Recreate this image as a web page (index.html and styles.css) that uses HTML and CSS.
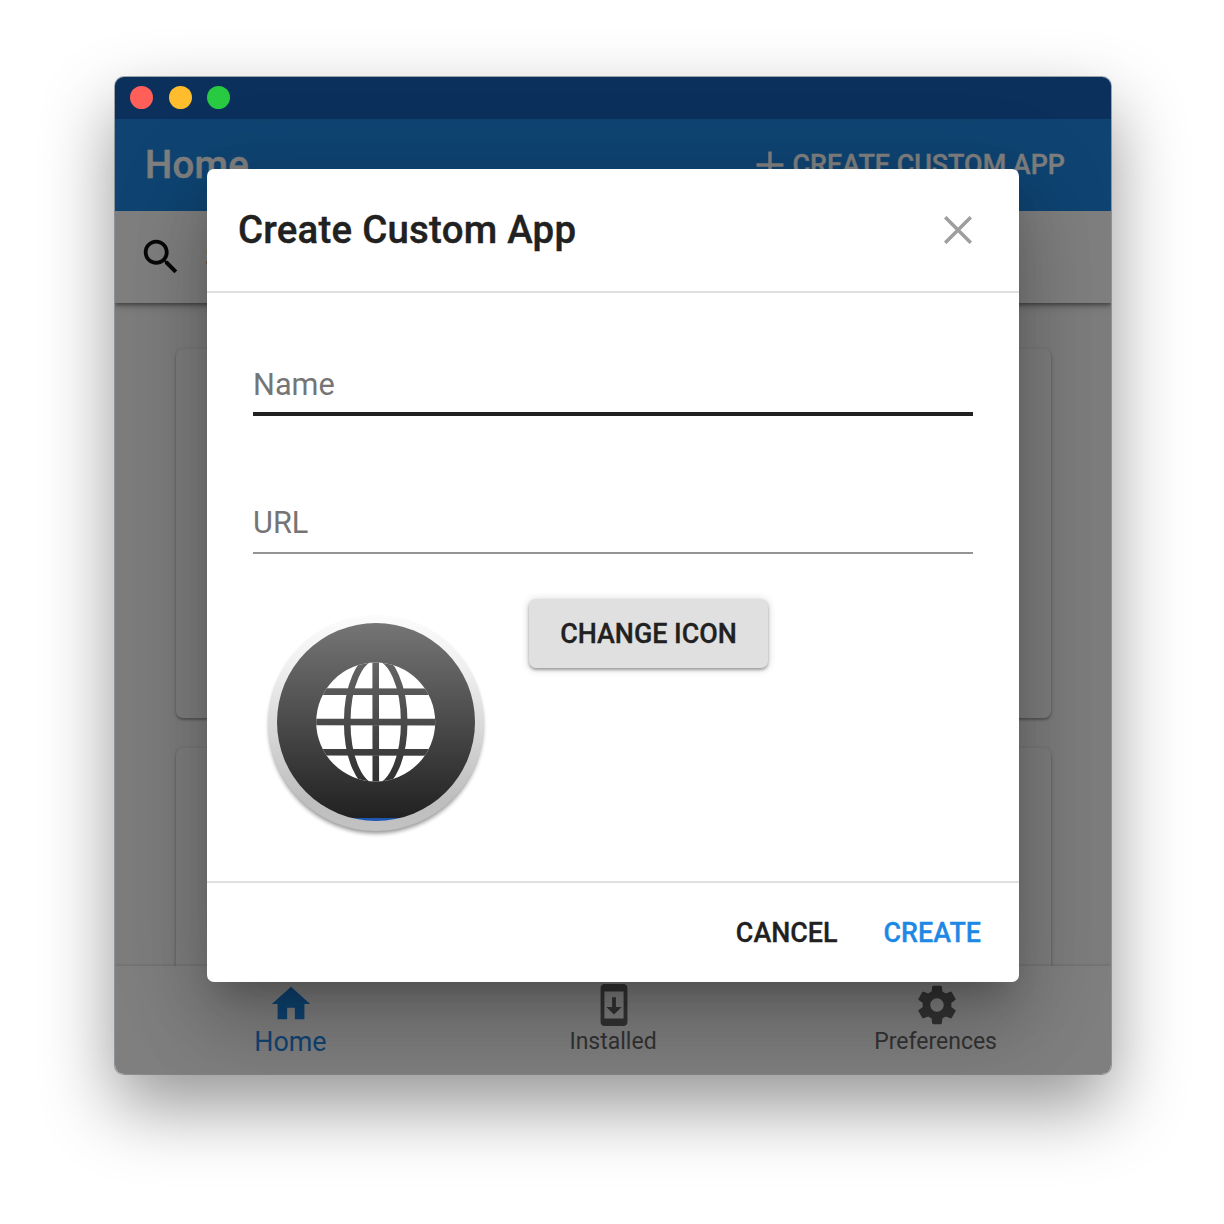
FILE: index.html
```html
<!DOCTYPE html>
<html lang="en">
<head>
<meta charset="utf-8">
<title>Create Custom App</title>
<link rel="stylesheet" href="styles.css">
</head>
<body>
<div class="window">
  <div class="titlebar">
    <span class="light light-close"></span>
    <span class="light light-min"></span>
    <span class="light light-max"></span>
  </div>
  <header class="appbar">
    <h1 class="appbar-title">Home</h1>
    <div class="appbar-action">
      <svg class="plus" viewBox="0 0 28 28"><path d="M14 .5v27M.5 14h27" stroke="currentColor" stroke-width="3.4"/></svg>
      <span>CREATE CUSTOM APP</span>
    </div>
  </header>
  <div class="search">
    <svg class="icon" viewBox="0 0 24 24"><path d="M15.5 14h-.79l-.28-.27C15.41 12.59 16 11.11 16 9.5 16 5.91 13.09 3 9.5 3S3 5.91 3 9.5 5.91 16 9.5 16c1.61 0 3.09-.59 4.23-1.57l.27.28v.79l5 4.99L20.49 19l-4.99-5zm-6 0C7.01 14 5 11.99 5 9.5S7.01 5 9.5 5 14 7.01 14 9.5 11.99 14 9.5 14z"/></svg>
    <span class="search-text">Search apps</span>
  </div>
  <main class="content">
    <div class="card"></div>
    <div class="card"></div>
  </main>
  <nav class="bottomnav">
    <div class="tab tab-active">
      <svg class="icon" viewBox="0 0 24 24"><path d="M10 20v-6h4v6h5v-8h3L12 3 2 12h3v8z"/></svg>
      <span>Home</span>
    </div>
    <div class="tab">
      <svg class="icon" viewBox="0 0 24 24"><path d="M17 1.01L7 1c-1.1 0-2 .9-2 2v18c0 1.1.9 2 2 2h10c1.1 0 2-.9 2-2V3c0-1.1-.9-1.99-2-1.99zM17 19H7V5h10v14zm-1-6h-3V8h-2v5H8l4 4 4-4z"/></svg>
      <span>Installed</span>
    </div>
    <div class="tab">
      <svg class="icon" viewBox="0 0 24 24"><path d="M19.43 12.98c.04-.32.07-.64.07-.98s-.03-.66-.07-.98l2.11-1.65c.19-.15.24-.42.12-.64l-2-3.46c-.12-.22-.39-.3-.61-.22l-2.49 1c-.52-.4-1.08-.73-1.69-.98l-.38-2.65C14.46 2.18 14.25 2 14 2h-4c-.25 0-.46.18-.49.42l-.38 2.65c-.61.25-1.17.59-1.69.98l-2.49-1c-.23-.09-.49 0-.61.22l-2 3.46c-.13.22-.07.49.12.64l2.11 1.65c-.04.32-.07.65-.07.98s.03.66.07.98l-2.11 1.65c-.19.15-.24.42-.12.64l2 3.46c.12.22.39.3.61.22l2.49-1c.52.4 1.08.73 1.69.98l.38 2.65c.03.24.24.42.49.42h4c.25 0 .46-.18.49-.42l.38-2.65c.61-.25 1.17-.59 1.69-.98l2.49 1c.23.09.49 0 .61-.22l2-3.46c.12-.22.07-.49-.12-.64l-2.11-1.65zM12 15.5c-1.93 0-3.5-1.57-3.5-3.5s1.57-3.5 3.5-3.5 3.5 1.57 3.5 3.5-1.57 3.5-3.5 3.5z"/></svg>
      <span>Preferences</span>
    </div>
  </nav>
  <div class="backdrop">
    <section class="dialog">
      <header class="dialog-head">
        <h2 class="dialog-title">Create Custom App</h2>
        <svg class="close" viewBox="0 0 28 28"><path d="M1.2 1.2l25.600 25.600M26.800 1.200L1.200 26.800" stroke="currentColor" stroke-width="3.5"/></svg>
      </header>
      <div class="dialog-body">
        <div class="field field-focused">Name</div>
        <div class="field">URL</div>
        <div class="icon-row">
          <svg class="app-icon" viewBox="0 0 246 246">
            <defs>
              <linearGradient id="ring" x1="0" y1="0" x2="0" y2="1">
                <stop offset="0" stop-color="#fcfcfc"/><stop offset=".25" stop-color="#efefef"/><stop offset=".85" stop-color="#bebebe"/><stop offset="1" stop-color="#c2c2c2"/>
              </linearGradient>
              <linearGradient id="disc" gradientUnits="userSpaceOnUse" x1="0" y1="24" x2="0" y2="222">
                <stop offset="0" stop-color="#757575"/><stop offset=".987" stop-color="#212121"/><stop offset=".987" stop-color="#1d57b0"/><stop offset="1" stop-color="#1d57b0"/>
              </linearGradient>
              <clipPath id="globe"><circle cx="122.700" cy="123" r="59.500"/></clipPath>
              <filter id="soft" x="-10%" y="-10%" width="120%" height="125%"><feGaussianBlur stdDeviation="2"/></filter>
            </defs>
            <circle cx="123" cy="127.500" r="107" fill="#000" opacity=".42" filter="url(#soft)"/>
            <circle cx="123" cy="124" r="108" fill="url(#ring)"/>
            <circle cx="123" cy="123" r="99" fill="url(#disc)"/>
            <circle cx="122.700" cy="123" r="59.500" fill="#fff"/>
            <g clip-path="url(#globe)" fill="none" stroke="url(#disc)" stroke-width="6.600">
              <ellipse cx="122.700" cy="123" rx="28.500" ry="64.700"/>
              <path d="M122.700 62L122.800 184M62 92.600L184 92.700M62 123L184 123.100M62 153.300L184 153.400"/>
            </g>
          </svg>
          <div class="raised">CHANGE ICON</div>
        </div>
      </div>
      <footer class="dialog-foot">
        <span>CANCEL</span>
        <span class="primary">CREATE</span>
      </footer>
    </section>
  </div>
</div>
</body>
</html>
```
FILE: styles.css
```css
* { box-sizing: border-box; }
body {
  margin: 0;
  height: 1224px;
  padding: 77px 0 0 115px;
  overflow: hidden;
  background: #fff;
  font-family: Roboto, "Liberation Sans", sans-serif;
  color: #212121;
}
h1, h2 {
  margin: 0;
  padding-bottom: 2px;
  font-size: 38.4px;
  font-weight: 500;
  letter-spacing: .25px;
  -webkit-text-stroke: .4px currentColor;
}
.window {
  position: relative;
  display: flex;
  flex-direction: column;
  width: 996px;
  height: 997px;
  border-radius: 9px;
  background: #fafafa;
  box-shadow: 0 0 0 1px rgba(80, 90, 100, .5), 0 32px 72px rgba(0, 0, 0, .42);
}
.titlebar {
  height: 42px;
  display: flex;
  align-items: center;
  gap: 15.5px;
  padding: 0 0 1px 15px;
  border-radius: 9px 9px 0 0;
  background: #1660b8;
}
/* window controls stay bright above the backdrop */
.light { position: relative; z-index: 3; width: 23px; height: 23px; border-radius: 50%; }
.light-close { background: #ff5f58; }
.light-min { background: #ffbd2e; }
.light-max { background: #28ca42; }
.appbar {
  height: 92px;
  display: flex;
  align-items: center;
  justify-content: space-between;
  padding: 0 46px 0 30px;
  background: #1e88e5;
  color: #fff;
}
.appbar-action {
  display: flex;
  align-items: center;
  gap: 9px;
  font-size: 26.9px;
  font-weight: 500;
  -webkit-text-stroke: .3px currentColor;
}
.plus { width: 28px; height: 28px; }
.icon { width: 46px; height: 46px; fill: currentColor; flex: none; }
.search {
  position: relative;
  height: 92px;
  flex: none;
  display: flex;
  align-items: center;
  gap: 21px;
  padding-left: 23px;
  background: #fff;
  color: #111;
  box-shadow: 0 2px 4px rgba(0, 0, 0, .4), 0 2px 10px rgba(0, 0, 0, .2);
  clip-path: inset(0 0 -14px 0);
}
.search-text { font-size: 30.7px; color: #757575; }
.content {
  flex: 1;
  min-height: 0;
  overflow: hidden;
  padding: 46px 60px 0 61px;
  display: flex;
  flex-direction: column;
  gap: 30px;
}
.card {
  flex: none;
  height: 369px;
  border-radius: 7px;
  background: #fdfdfd;
  box-shadow: 0 2px 2px rgba(0, 0, 0, .2), 0 1px 4px rgba(0, 0, 0, .2);
}
.bottomnav {
  position: relative;
  height: 108px;
  flex: none;
  display: flex;
  justify-content: center;
  background: #fff;
  border-radius: 0 0 9px 9px;
  box-shadow: 0 -1px 3px rgba(0, 0, 0, .12);
  clip-path: inset(-5px 0 0 0);
}
.tab {
  width: 322.6px;
  padding-top: 16px;
  display: flex;
  flex-direction: column;
  align-items: center;
  font-size: 23px;
  line-height: 27px;
  color: #666;
}
.tab .icon { margin-left: 2px; }
.tab-active { padding-top: 15px; font-size: 26.9px; line-height: 31px; color: #1e88e5; }
.backdrop {
  position: absolute;
  inset: 0;
  z-index: 2;
  display: flex;
  align-items: center;
  justify-content: center;
  overflow: hidden;
  border-radius: 9px;
  background: rgba(0, 0, 0, .5);
}
.dialog {
  width: 812px;
  height: 813px;
  display: flex;
  flex-direction: column;
  border-radius: 7px;
  background: #fff;
  box-shadow: 0 21px 29px -13px rgba(0, 0, 0, .2), 0 46px 73px 6px rgba(0, 0, 0, .14), 0 17px 88px 15px rgba(0, 0, 0, .12);
}
.dialog-head {
  height: 124px;
  display: flex;
  align-items: center;
  justify-content: space-between;
  padding: 0 47px 0 31px;
  border-bottom: 2px solid #e0e0e0;
}
.close { width: 28px; height: 28px; color: #9e9e9e; }
.dialog-body { flex: 1; padding: 62px 46px 0; }
.field {
  height: 61px;
  padding-top: 11px;
  margin-bottom: 77px;
  border-bottom: 2px solid #949494;
  font-size: 30.7px;
  line-height: 37px;
  color: #757575;
}
.field + .field { margin-bottom: 45px; }
.field-focused { border-bottom: 4px solid #212121; }
.icon-row { display: flex; align-items: flex-start; gap: 30px; }
.app-icon { width: 246px; height: 246px; overflow: visible; }
.raised {
  width: 239px;
  height: 69px;
  display: flex;
  align-items: center;
  justify-content: center;
  border-radius: 7px;
  background: #e0e0e0;
  font-size: 26.9px;
  font-weight: 500;
  -webkit-text-stroke: .3px currentColor;
  box-shadow: 0 2px 3px rgba(0, 0, 0, .3), 0 1px 8px rgba(0, 0, 0, .2);
}
.dialog-foot {
  height: 101px;
  display: flex;
  align-items: center;
  justify-content: flex-end;
  gap: 46px;
  padding-right: 38px;
  border-top: 2px solid #e0e0e0;
  font-size: 26.9px;
  font-weight: 500;
  -webkit-text-stroke: .3px currentColor;
}
.primary { color: #1e88e5; }
```
